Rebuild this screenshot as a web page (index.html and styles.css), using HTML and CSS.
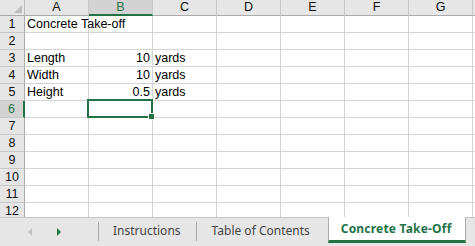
FILE: index.html
```html
<!DOCTYPE html>
<html lang="en">
<head>
  <meta charset="UTF-8">
  <title>Concrete Take-Off</title>
  <link rel="stylesheet" href="styles.css">
</head>
<body>

<div class="sheet" id="sheet">
  <!-- cells are built by the script below -->
</div>

<div class="tabbar">
  <div class="nav">
    <span class="arrow prev"></span>
    <span class="arrow next"></span>
  </div>
  <div class="tab">Instructions</div>
  <div class="tab toc">Table of Contents</div>
  <div class="tab active">Concrete Take-Off</div>
</div>

<script>
// sheet contents
const columns = ['A', 'B', 'C', 'D', 'E', 'F', 'G'];
const rowCount = 12;
const data = {
  'A1': 'Concrete Take-off',
  'A3': 'Length', 'B3': 10, 'C3': 'yards',
  'A4': 'Width', 'B4': 10, 'C4': 'yards',
  'A5': 'Height', 'B5': 0.5, 'C5': 'yards'
};
const selected = { col: 'B', row: 6 };

function cell(className, text) {
  const div = document.createElement('div');
  div.className = className;
  if (text !== undefined) div.textContent = text;
  return div;
}

function renderSheet() {
  const sheet = document.getElementById('sheet');

  // header row
  sheet.appendChild(cell('corner'));
  columns.forEach(col => {
    const head = cell('col-head', col);
    if (col === selected.col) head.classList.add('sel');
    sheet.appendChild(head);
  });
  // column H is only a sliver at the right edge
  sheet.appendChild(cell('col-head'));

  // data rows
  for (let r = 1; r <= rowCount; r++) {
    const head = cell('row-head', r);
    if (r === selected.row) head.classList.add('sel');
    sheet.appendChild(head);

    columns.forEach(col => {
      const value = data[col + r];
      const c = cell('cell', value);
      if (typeof value === 'number') c.classList.add('num');
      if (col === selected.col && r === selected.row) c.classList.add('active');
      sheet.appendChild(c);
    });
    sheet.appendChild(cell('cell'));
  }
}

renderSheet();
</script>
</body>
</html>
```

FILE: styles.css
```css
body {
  margin: 0;
  width: 475px;
  height: 246px;
  overflow: hidden;
  background: #ffffff;
  font-family: "Liberation Sans", Arial, sans-serif;
  font-size: 12.5px;
  color: #000;
}

.sheet {
  display: grid;
  grid-template-columns: 25px repeat(7, 64px) 1fr;
  grid-template-rows: 16px;
  grid-auto-rows: 17px;
  height: 217px;
  overflow: hidden;
}

.sheet > div {
  box-sizing: border-box;
  border-right: 1px solid #d4d4d4;
  border-bottom: 1px solid #d4d4d4;
  white-space: nowrap;
  line-height: 16px;
}

.corner {
  position: relative;
  background: #e6e6e6;
  border-right-color: #bdbdbd !important;
  border-bottom-color: #ababab !important;
}

.corner::after {
  content: '';
  position: absolute;
  right: 2px;
  bottom: 2px;
  width: 0;
  height: 0;
  border-left: 8px solid transparent;
  border-bottom: 8px solid #bcbcbc;
}

.col-head {
  background: #e6e6e6;
  text-align: center;
  line-height: 15px !important;
  border-right-color: #c8c8c8 !important;
  border-bottom-color: #ababab !important;
  color: #111;
}

.col-head.sel {
  background: #d3d3d3;
  color: #217346;
  border-bottom: 2px solid #217346 !important;
  line-height: 14px !important;
}

.row-head {
  background: #e6e6e6;
  text-align: center;
  border-right-color: #ababab !important;
  border-bottom-color: #c8c8c8 !important;
  color: #111;
}

.row-head.sel {
  background: #d3d3d3;
  color: #217346;
  border-right: 2px solid #217346 !important;
}

.cell {
  padding: 0 2px;
  overflow: visible;
}

.cell.num {
  text-align: right;
}

.cell.active {
  position: relative;
}

.cell.active::before {
  content: '';
  position: absolute;
  left: -2px;
  top: -2px;
  right: -1px;
  bottom: -1px;
  border: 2px solid #217346;
}

.cell.active::after {
  content: '';
  position: absolute;
  right: -3px;
  bottom: -3px;
  width: 5px;
  height: 5px;
  background: #217346;
  border: 1px solid #ffffff;
}

/* sheet tabs */
.tabbar {
  display: flex;
  height: 29px;
  box-sizing: border-box;
  background: #e6e6e6;
  border-top: 1px solid #c6c6c6;
  font-family: "Noto Sans", "Open Sans", sans-serif;
  font-size: 12px;
  color: #444;
}

.nav {
  width: 99px;
  display: flex;
  align-items: center;
  gap: 25px;
  padding-left: 28px;
  box-sizing: border-box;
  border-right: 1px solid #a6a6a6;
  margin: 4px 0 5px;
}

.arrow {
  width: 0;
  height: 0;
  border-top: 4px solid transparent;
  border-bottom: 4px solid transparent;
}

.arrow.prev {
  border-right: 4px solid #c0c0c0;
}

.arrow.next {
  border-left: 4px solid #217346;
}

.tab {
  display: flex;
  align-items: center;
  padding: 0 15px 2px 14px;
  margin: 4px 0 5px;
  border-right: 1px solid #a6a6a6;
}

.tab.toc {
  padding: 0 18px 2px 15px;
}

.tab.active {
  margin: -1px 0 3px -1px;
  padding: 0 13px 0 12px;
  background: #ffffff;
  border-left: 1px solid #ababab;
  border-right: 1px solid #ababab;
  border-bottom: 3px solid #217346;
  color: #217346;
  font-weight: bold;
  letter-spacing: 0.2px;
}
```
